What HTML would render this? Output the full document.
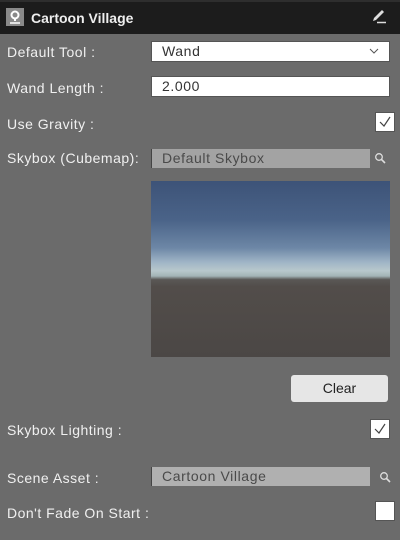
<!DOCTYPE html>
<html><head><meta charset="utf-8"><style>
*{margin:0;padding:0;box-sizing:border-box}
body{width:400px;height:540px;background:#6b6b6b;position:relative;overflow:hidden;font-family:"Liberation Sans",sans-serif;color:#f0f0f0;font-size:14px}
.a{position:absolute}
.hdr{left:0;top:0;width:400px;height:34px;background:#1c1c1c;border-top:2px solid #2e2e2e}
.lbl{left:7px;line-height:16px;white-space:nowrap;letter-spacing:0.5px}
.fld{background:#fff;color:#333;border:1px solid #555;padding-left:10px;line-height:18px;letter-spacing:0.6px}
.obj{background:#a3a3a3;color:#4a4a4a;border-left:1px solid #444;padding-left:10px;line-height:19px;letter-spacing:0.6px}
.cb{background:#fff;border:1px solid #555}
</style></head><body>
<div class="a hdr"></div>
<div class="a" style="left:6px;top:8px;width:18px;height:18px;background:#8a8a8a">
<svg width="18" height="18" viewBox="0 0 18 18"><circle cx="9" cy="7" r="3.5" fill="none" stroke="#fff" stroke-width="2"/><path d="M9 11 L9 13" stroke="#fff" stroke-width="2"/><path d="M4 15 H14" stroke="#fff" stroke-width="1.5"/></svg></div>
<div class="a" style="left:31px;top:10px;font-size:14px;font-weight:bold;color:#eee;line-height:16px">Cartoon Village</div>
<svg class="a" style="left:371px;top:8px" width="16" height="16" viewBox="0 0 16 16"><path d="M2 13 L3 10 L11 2 L13 4 L5 12 Z" fill="#ddd"/><path d="M6 14.5 H15" stroke="#ddd" stroke-width="1.5"/></svg>

<div class="a lbl" style="top:44px">Default Tool :</div>
<div class="a fld" style="left:151px;top:41px;width:239px;height:21px;line-height:19px">Wand</div>
<svg class="a" style="left:369px;top:47px" width="10" height="8" viewBox="0 0 10 8"><path d="M1 2 L5 6 L9 2" fill="none" stroke="#555" stroke-width="1"/></svg>

<div class="a lbl" style="top:80px">Wand Length :</div>
<div class="a fld" style="left:151px;top:76px;width:239px;height:21px;line-height:19px">2.000</div>

<div class="a lbl" style="top:116px">Use Gravity :</div>
<div class="a cb" style="left:375px;top:112px;width:20px;height:20px"><svg width="18" height="18" viewBox="0 0 18 18"><path d="M4 9 L8 13 L14 4" fill="none" stroke="#444" stroke-width="1.2"/></svg></div>

<div class="a lbl" style="top:150px">Skybox (Cubemap):</div>
<div class="a obj" style="left:151px;top:149px;width:219px;height:19px">Default Skybox</div>
<svg class="a" style="left:374px;top:152px" width="12" height="12" viewBox="0 0 12 12"><circle cx="5" cy="5" r="3.3" fill="none" stroke="#ddd" stroke-width="1.3"/><path d="M7.5 7.5 L11 11" stroke="#ddd" stroke-width="1.6"/></svg>

<div class="a" style="left:151px;top:181px;width:239px;height:176px;background:linear-gradient(#3d5378 0%,#4a6388 22%,#6d87a6 38%,#9fb4c6 46%,#b8c8cc 51%,#a3b4b6 54%,#5a5856 56%,#524d4a 60%,#4b4745 100%)"></div>

<div class="a" style="left:291px;top:375px;width:97px;height:27px;background:#e6e6e6;border-radius:3px;color:#222;text-align:center;line-height:27px">Clear</div>

<div class="a lbl" style="top:422px">Skybox Lighting :</div>
<div class="a cb" style="left:370px;top:419px;width:20px;height:20px"><svg width="18" height="18" viewBox="0 0 18 18"><path d="M4 9 L8 13 L14 4" fill="none" stroke="#444" stroke-width="1.2"/></svg></div>

<div class="a lbl" style="top:470px">Scene Asset :</div>
<div class="a obj" style="left:151px;top:467px;width:219px;height:19px;background:#b0b0b0">Cartoon Village</div>
<svg class="a" style="left:379px;top:471px" width="12" height="12" viewBox="0 0 12 12"><circle cx="5" cy="5" r="3.3" fill="none" stroke="#ddd" stroke-width="1.3"/><path d="M7.5 7.5 L11 11" stroke="#ddd" stroke-width="1.6"/></svg>

<div class="a lbl" style="top:505px">Don't Fade On Start :</div>
<div class="a cb" style="left:375px;top:501px;width:20px;height:20px"></div>
</body></html>
